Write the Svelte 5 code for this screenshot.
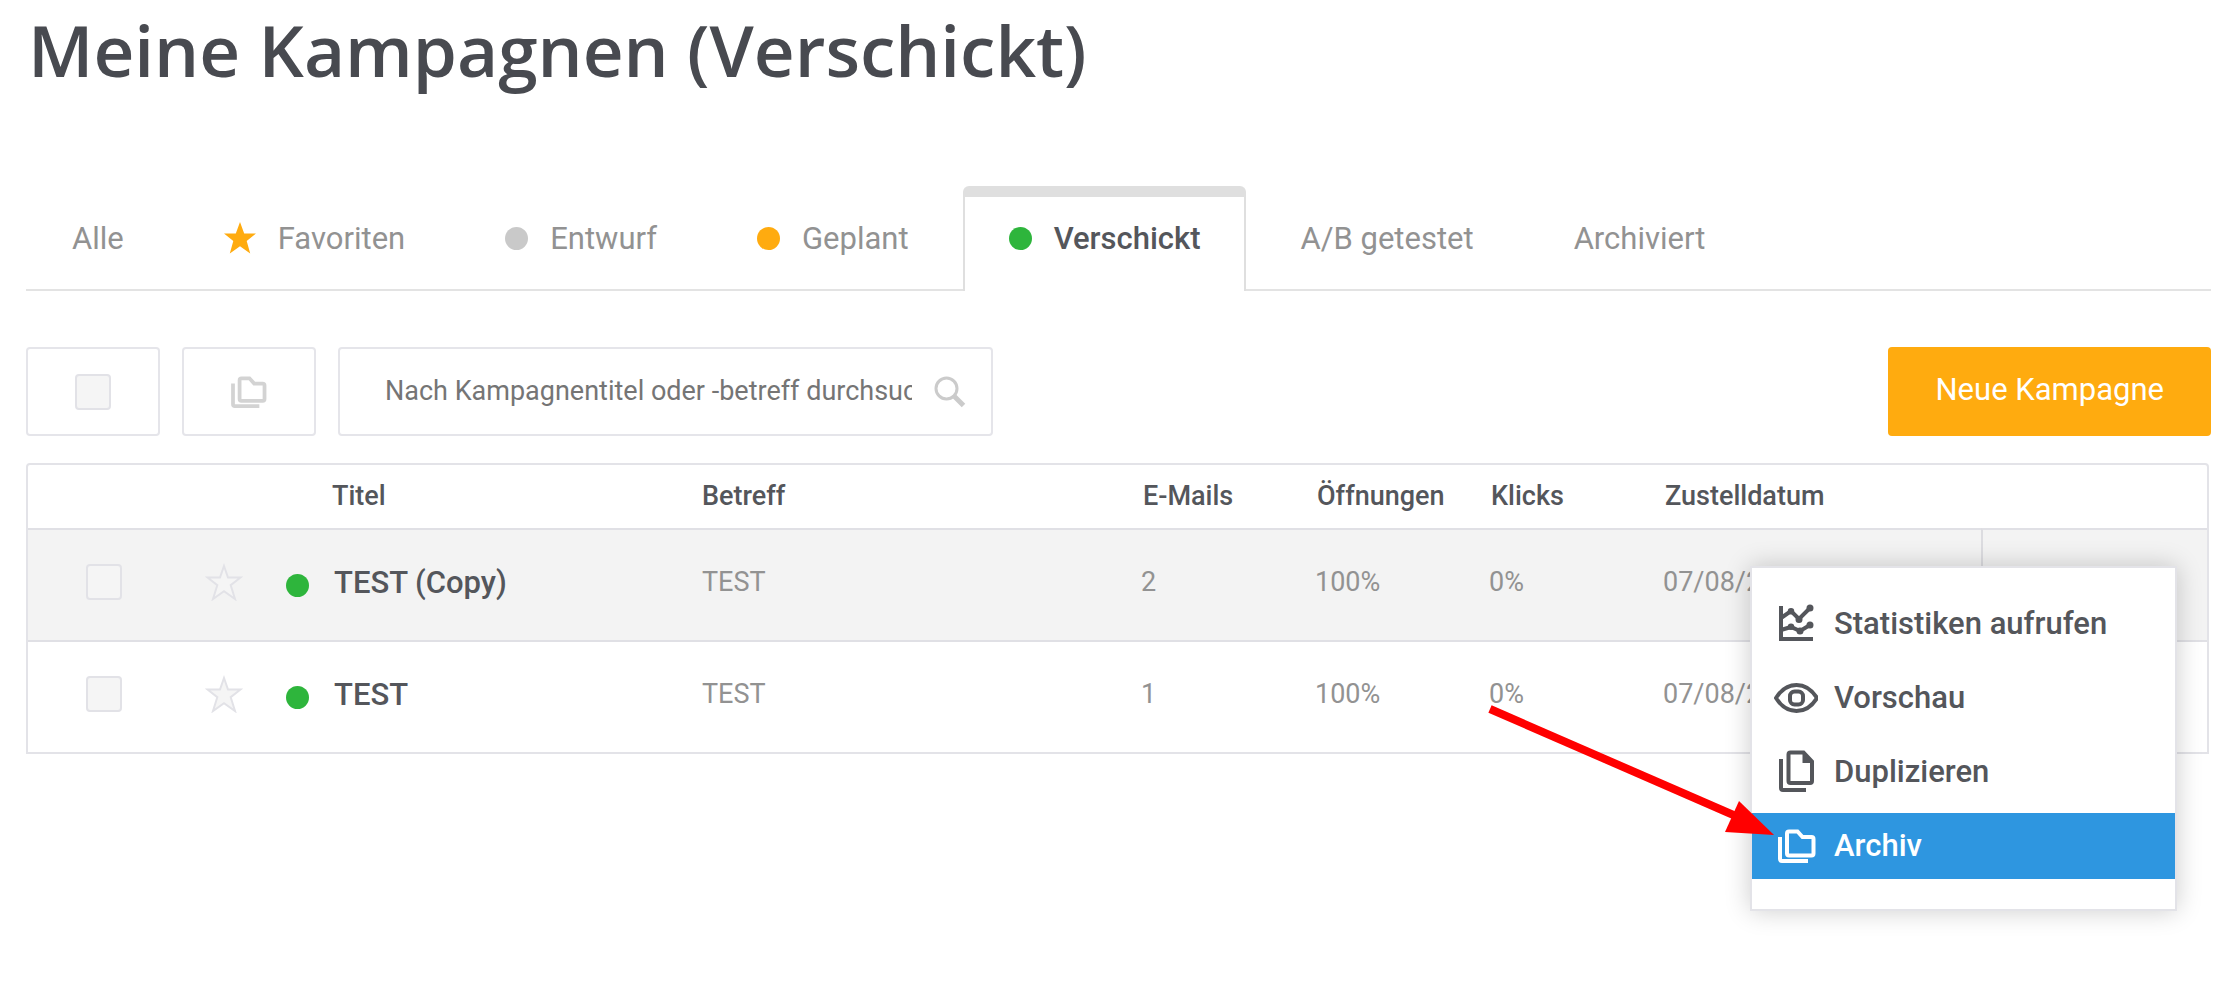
<script lang="ts">
  type Tab = { label: string; marker?: 'star' | 'gray' | 'orange' | 'green' };

  const tabs: Tab[] = [
    { label: 'Alle' },
    { label: 'Favoriten', marker: 'star' },
    { label: 'Entwurf', marker: 'gray' },
    { label: 'Geplant', marker: 'orange' },
    { label: 'Verschickt', marker: 'green' },
    { label: 'A/B getestet' },
    { label: 'Archiviert' }
  ];

  const campaigns = [
    { title: 'TEST (Copy)', subject: 'TEST', mails: 2, opens: '100%', clicks: '0%', date: '07/08/2020' },
    { title: 'TEST', subject: 'TEST', mails: 1, opens: '100%', clicks: '0%', date: '07/08/2020' }
  ];

  const actions = [
    { id: 'stats', label: 'Statistiken aufrufen' },
    { id: 'preview', label: 'Vorschau' },
    { id: 'copy', label: 'Duplizieren' },
    { id: 'archive', label: 'Archiv' }
  ];

  let activeTab = $state('Verschickt');
  let activeAction = $state('archive');
  let openRow = $state(0);
  let search = $state('');
</script>

{#snippet folders()}
  <path d="M2 8v22a2 2 0 0 0 2 2h26" />
  <path d="M9 4.500a2 2 0 0 1 2-2h8.500l5 5.500h9a2 2 0 0 1 2 2v14.500a2 2 0 0 1-2 2H11a2 2 0 0 1-2-2z" />
{/snippet}

<main class="page">
  <h1>Meine Kampagnen (Verschickt)</h1>

  <nav class="tabs">
    {#each tabs as tab}
      <button
        type="button"
        class="tab"
        class:active={tab.label === activeTab}
        onclick={() => (activeTab = tab.label)}
      >
        {#if tab.marker === 'star'}
          <svg class="tab-star" viewBox="0 0 32 32" aria-hidden="true">
            <path d="M16 0l4.200 11.500H32l-9.300 7.500 3.500 12.500L16 24.300 5.800 31.500 9.300 19 0 11.500h11.800z" />
          </svg>
        {:else if tab.marker}
          <span class="dot {tab.marker}"></span>
        {/if}
        {tab.label}
      </button>
    {/each}
  </nav>

  <div class="toolbar">
    <label class="box">
      <input type="checkbox" class="check" aria-label="Alle auswählen" />
    </label>
    <button type="button" class="box" aria-label="Archivieren">
      <svg class="icon-archive" viewBox="0 0 38 34" aria-hidden="true">{@render folders()}</svg>
    </button>
    <label class="search">
      <input
        type="text"
        placeholder="Nach Kampagnentitel oder -betreff durchsuchen"
        aria-label="Suche"
        bind:value={search}
      />
      <svg viewBox="0 0 32 32" aria-hidden="true">
        <circle cx="12.500" cy="12.500" r="10.500" />
        <path class="handle" d="M20.500 20.500l9 9" />
      </svg>
    </label>
    <button type="button" class="primary">Neue Kampagne</button>
  </div>

  <table>
    <colgroup>
      <col class="col-check" />
      <col class="col-star" />
      <col class="col-dot" />
      <col class="col-title" />
      <col />
      <col class="col-num" />
      <col class="col-num" />
      <col class="col-num" />
      <col class="col-date" />
      <col class="col-action" />
    </colgroup>
    <thead>
      <tr>
        <th></th>
        <th></th>
        <th></th>
        <th>Titel</th>
        <th>Betreff</th>
        <th class="value">E-Mails</th>
        <th class="value">Öffnungen</th>
        <th class="value">Klicks</th>
        <th class="value">Zustelldatum</th>
        <th></th>
      </tr>
    </thead>
    <tbody>
      {#each campaigns as campaign, i}
        <tr class:open={openRow === i}>
          <td>
            <input type="checkbox" class="check" aria-label="{campaign.title} auswählen" />
          </td>
          <td>
            <button type="button" class="favorite" aria-label="Favorit">
              <svg viewBox="0 0 38 38" aria-hidden="true">
                <path d="M19 3l4 11.500h12.500l-9.800 7.700L30 36l-11-7.800L8 36l4.300-13.800L2.500 14.500H15z" />
              </svg>
            </button>
          </td>
          <td class="status"><span class="dot green"></span></td>
          <td class="title">{campaign.title}</td>
          <td>{campaign.subject}</td>
          <td>{campaign.mails}</td>
          <td>{campaign.opens}</td>
          <td>{campaign.clicks}</td>
          <td>{campaign.date}</td>
          <td class="action">
            {#if openRow === i}
              <div class="menu">
                {#each actions as action}
                  <button
                    type="button"
                    class="menu-item"
                    class:active={activeAction === action.id}
                    onmouseenter={() => (activeAction = action.id)}
                  >
                    <svg viewBox="0 0 44 44" aria-hidden="true">
                      {#if action.id === 'stats'}
                        <path d="M7 5v33h32" />
                        <path d="M7 17l10-7 8 8L36 7M7 29l10-3 9 4 10-6" />
                        <path class="solid" d="M17 7a3 3 0 1 0 0 6.500 3 3 0 0 0 0-6.500zM25 15a3.500 3.500 0 1 0 0 7 3.500 3.500 0 0 0 0-7zM36 3.500a3.500 3.500 0 1 0 0 7 3.500 3.500 0 0 0 0-7zM17 22.500a3 3 0 1 0 0 6.500 3 3 0 0 0 0-6.500zM26 26.500a3.500 3.500 0 1 0 0 7 3.500 3.500 0 0 0 0-7zM36 20.500a3.500 3.500 0 1 0 0 7 3.500 3.500 0 0 0 0-7z" />
                      {:else if action.id === 'preview'}
                        <path d="M2 23C7 15 14 10 22.500 10S38 15 43 23c-5 8-12 13-20.500 13S7 31 2 23z" />
                        <rect x="16" y="16.500" width="13" height="13" rx="4.500" />
                      {:else if action.id === 'copy'}
                        <path d="M7 10v29a2 2 0 0 0 2 2h23" />
                        <path d="M14.500 5.500a2 2 0 0 1 2-2h13l8.500 9v19.500a2 2 0 0 1-2 2H16.500a2 2 0 0 1-2-2z" />
                        <path class="solid" d="M28.500 3h2l8.500 9v2H28.500z" />
                      {:else}
                        <g transform="translate(4 6)">{@render folders()}</g>
                      {/if}
                    </svg>
                    {action.label}
                  </button>
                {/each}
                <svg class="pointer" viewBox="0 0 286 134" aria-hidden="true">
                  <path class="shaft" d="M2 7L250 115" />
                  <path class="head" d="M251 99L286 133L237 130z" />
                </svg>
              </div>
            {/if}
          </td>
        </tr>
      {/each}
    </tbody>
  </table>
</main>

<style>
  :global(body) {
    margin: 0;
    background: #fff;
  }

  .page {
    box-sizing: border-box;
    min-height: 100vh;
    padding: 0 26px;
    font-family: Roboto, 'Liberation Sans', sans-serif;
    color: #54565b;
  }

  button,
  input {
    font-family: inherit;
  }

  button {
    border: none;
    background: none;
    cursor: pointer;
  }

  h1 {
    margin: 0;
    padding: 0 2px 86px;
    font-family: 'Open Sans', sans-serif;
    font-size: 71px;
    font-weight: 600;
    line-height: 100px;
    color: #484a50;
  }

  .dot {
    display: block;
    flex: none;
    width: 23px;
    height: 23px;
    border-radius: 50%;
  }

  .gray {
    background: #c9c9c9;
  }

  .orange {
    background: #ffab0f;
  }

  .green {
    background: #2eb53c;
  }

  /* Tabs */
  .tabs {
    display: flex;
    gap: 8px;
    border-bottom: 2px solid #e3e3e3;
  }

  .tab {
    display: flex;
    align-items: center;
    gap: 22px;
    box-sizing: border-box;
    height: 105px;
    margin-bottom: -2px;
    padding: 0 44px 12px;
    border: 2px solid transparent;
    border-top-width: 11px;
    border-bottom: none;
    border-radius: 6px 6px 0 0;
    font-size: 31px;
    color: #929292;
    white-space: nowrap;
  }

  .tab.active {
    border-color: #dfdfdf;
    background: #fff;
    font-weight: 500;
    color: #54565b;
  }

  .tab-star {
    width: 32px;
    height: 32px;
    fill: #ffab0f;
  }

  /* Toolbar */
  .toolbar {
    display: flex;
    gap: 22px;
    margin: 56px 0 27px;
  }

  .box,
  .search {
    display: flex;
    align-items: center;
    justify-content: center;
    box-sizing: border-box;
    height: 89px;
    border: 2px solid #e5e5ea;
    border-radius: 4px;
  }

  .box {
    width: 134px;
    padding: 0;
  }

  .check {
    appearance: none;
    display: block;
    box-sizing: border-box;
    width: 36px;
    height: 36px;
    margin: 0;
    border: 2px solid #e2e2e7;
    border-radius: 4px;
    background: #f5f5f5;
  }

  .check:checked {
    background: #2e96e0;
  }

  .icon-archive {
    width: 36px;
    height: 32px;
    fill: none;
    stroke: #d3d3d3;
    stroke-width: 4;
  }

  .search {
    width: 655px;
    padding: 0 25px 0 45px;
    gap: 22px;
  }

  .search input {
    flex: 1;
    min-width: 0;
    padding: 0 0 2px;
    border: none;
    outline: none;
    font-size: 27px;
    color: #54565b;
  }

  .search input::placeholder {
    color: #757575;
  }

  .search svg {
    width: 32px;
    height: 32px;
    fill: none;
    stroke: #cbcbcb;
    stroke-width: 3;
  }

  .search .handle {
    stroke-width: 5;
  }

  .primary {
    margin-left: auto;
    padding: 0 47px 4px;
    border-radius: 4px;
    background: #ffab0f;
    font-size: 31px;
    color: #fff;
    white-space: nowrap;
  }

  /* Table */
  table {
    width: calc(100% - 2px);
    table-layout: fixed;
    border: 2px solid #e3e3e8;
    border-radius: 4px 4px 0 0;
    border-spacing: 0;
  }

  .col-check {
    width: 152px;
  }

  .col-star {
    width: 104px;
  }

  .col-dot {
    width: 48px;
  }

  .col-title {
    width: 370px;
  }

  .col-num {
    width: 174px;
  }

  .col-date {
    width: 318px;
  }

  .col-action {
    width: 226px;
  }

  th,
  td {
    box-sizing: border-box;
    padding: 0 0 6px;
    font-size: 27px;
    text-align: left;
    white-space: nowrap;
  }

  th {
    height: 63px;
    padding-bottom: 2px;
    font-weight: 500;
  }

  th.value {
    padding-left: 2px;
  }

  td {
    height: 112px;
    border-top: 2px solid #e0e0e5;
    color: #929292;
  }

  tr.open {
    background: #f3f3f3;
  }

  td .check {
    margin-left: 58px;
  }

  .status {
    padding: 0 0 0 2px;
  }

  .title {
    padding-left: 2px;
    font-size: 31px;
    font-weight: 500;
    color: #54565b;
  }

  .favorite {
    display: block;
    margin-left: 25px;
    padding: 0;
  }

  .favorite svg {
    display: block;
    width: 38px;
    height: 38px;
    fill: #f5f5f5;
    stroke: #e2e2e7;
    stroke-width: 2;
  }

  .action {
    position: relative;
  }

  tr.open .action {
    border-left: 2px solid #dcdce0;
  }

  /* Row menu */
  .menu {
    position: absolute;
    top: 36px;
    right: 30px;
    display: flex;
    flex-direction: column;
    gap: 8px;
    width: 423px;
    padding: 23px 0 30px;
    border: 2px solid #e3e3e8;
    background: #fff;
    box-shadow: 0 0 24px rgba(0, 0, 0, 0.2);
    z-index: 1;
  }

  .menu-item {
    display: flex;
    align-items: center;
    gap: 16px;
    height: 66px;
    padding: 0 22px 2px;
    font-size: 31px;
    font-weight: 500;
    color: #54565b;
  }

  .menu-item.active {
    background: #2e96e0;
    color: #fff;
  }

  .menu-item svg {
    width: 44px;
    height: 44px;
    fill: none;
    stroke: currentColor;
    stroke-width: 4;
  }

  .menu-item svg .solid {
    fill: currentColor;
    stroke: none;
  }

  .pointer {
    position: absolute;
    top: 134px;
    left: -264px;
    width: 286px;
    height: 134px;
    pointer-events: none;
  }

  .shaft {
    stroke: #f00;
    stroke-width: 8;
  }

  .head {
    fill: #f00;
  }
</style>
